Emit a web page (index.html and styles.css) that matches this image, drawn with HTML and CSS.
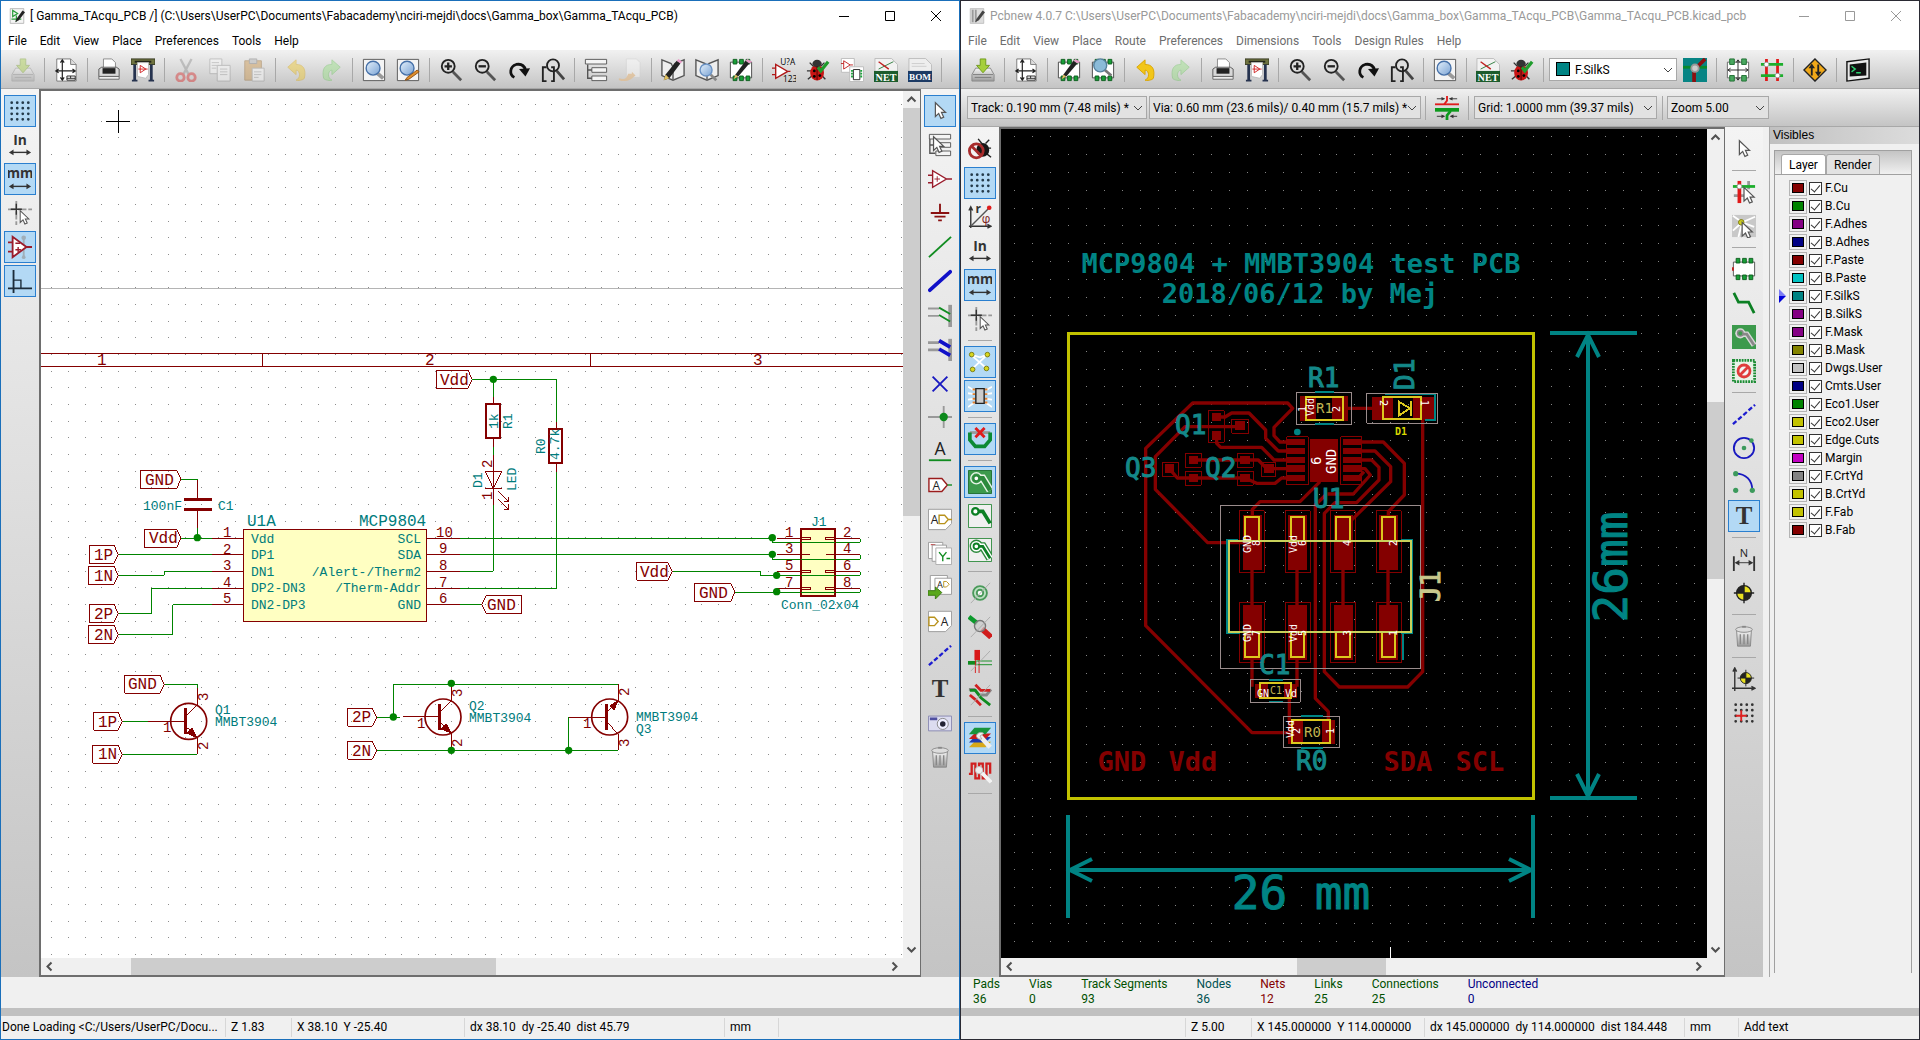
FILE: index.html
```html
<!DOCTYPE html>
<html lang="en">
<head>
    <meta charset="utf-8">
    <title>Gamma_TAcqu_PCB</title>
    <link rel="stylesheet" href="styles.css">
</head>
<body>

<!-- icon set -->
<svg class="defs" width="0" height="0">
    <defs>
        <linearGradient id="metal" x1="0" y1="0" x2="0" y2="1"><stop offset="0" stop-color="#f6f6f6"/><stop offset="1" stop-color="#9a9a9a"/></linearGradient>
        <linearGradient id="lens" x1="0" y1="0" x2="1" y2="1"><stop offset="0" stop-color="#e4f0fb"/><stop offset="1" stop-color="#7aa3d4"/></linearGradient>
        <path id="cursor" d="M0 0V15L3.600 11.600L6 17L9 15.700L6.600 10.500H11Z" fill="#fff" stroke="#555" stroke-width="1.300"/>
        <g id="pads" fill="#18a038" stroke="#0b5c1c"><path d="M4.500 1.500h4v5h-4zM11.500 1.500h4v5h-4zM18.500 1.500h4v5h-4zM4.500 19.500h4v5h-4zM11.500 19.500h4v5h-4zM18.500 19.500h4v5h-4z"/></g>
        <g id="arrows" stroke="#333" fill="#333"><path d="M4 21H22" stroke-width="1.500"/><path d="M1 21l5-3v6zM25 21l-5-3v6z" stroke="none"/></g>
        <g id="sheet"><path d="M3 1H18L24 7V25H3Z" fill="#fff" stroke="#777"/><path d="M18 1V7H24" fill="#ddd" stroke="#777"/></g>

        <symbol id="i-save" viewBox="0 0 26 26"><path d="M5 11H21L25 18V25H1V18Z" fill="url(#metal)" stroke="#888"/><path d="M2 18H24M4 21H22" stroke="#777"/><path d="M10 1H16V8H20L13 16L6 8H10Z" fill="#a5cf3b" stroke="#6f9a18"/></symbol>
        <symbol id="i-page" viewBox="0 0 26 26"><use href="#sheet"/><path d="M9 3V23M3 14H22M7 5l2-3 2 3M7 21l2 3 2-3M5 12l-3 2 3 2M20 12l3 2-3 2" fill="none" stroke="#222" stroke-width="1.300"/><path d="M14 19.500H23V24H14ZM14 22H23M18 19.500V22" fill="#fff" stroke="#222"/></symbol>
        <symbol id="i-print" viewBox="0 0 26 26"><path d="M7 12V1H16L20 5V12Z" fill="#fff" stroke="#888"/><path d="M2 12L5 10H21L24 12V20H2Z" fill="#d8d8d8" stroke="#555"/><path d="M6 11H20V17H6Z" fill="#222"/><path d="M2 20H24V23H2Z" fill="#eee" stroke="#666"/></symbol>
        <symbol id="i-plot" viewBox="0 0 26 26"><path d="M0 1H26V7H0Z" fill="#6f7340" stroke="#33361c"/><path d="M4 4H22" stroke="#22251a" stroke-width="2"/><path d="M4 7V24M22 7V24" stroke="#26334f" stroke-width="3"/><path d="M1 24.500H7M19 24.500H25" stroke="#26334f" stroke-width="2"/><path d="M7 5H19V18L16 22L7 20Z" fill="#fff" stroke="#bbb"/><path d="M10 8V16L16 12ZM8 12H18" fill="none" stroke="#d02020"/></symbol>
        <symbol id="i-cut" viewBox="0 0 26 26"><path d="M7 1L16 18M19 1L10 18" stroke="#888" stroke-width="2.500"/><circle cx="7" cy="21" r="4" fill="none" stroke="#d81c1c" stroke-width="3"/><circle cx="19" cy="21" r="4" fill="none" stroke="#d81c1c" stroke-width="3"/></symbol>
        <symbol id="i-copy" viewBox="0 0 26 26"><path d="M2 1H15V17H2Z" fill="#fff" stroke="#888"/><path d="M10 8H24V25H10Z" fill="#fff" stroke="#888"/><path d="M4 5H12M4 8H12M4 11H9M13 12H21M13 15H21M13 18H21" stroke="#999"/></symbol>
        <symbol id="i-paste" viewBox="0 0 26 26"><path d="M3 3H21V24H3Z" fill="#c98d3a" stroke="#8a5a1a"/><path d="M8 1H16V6H8Z" fill="#aaa" stroke="#666"/><path d="M11 11H24V25H11Z" fill="#fff" stroke="#888"/><path d="M13 15H21M13 18H21M13 21H18" stroke="#999"/></symbol>
        <symbol id="i-undo" viewBox="0 0 26 26"><path d="M3 10L12 2V7C20 7 23 12 21 22C20 24 13 25 12 24C17 22 17 14 12 13V18Z" fill="#f2c619" stroke="#d9a400"/></symbol>
        <symbol id="i-redo" viewBox="0 0 26 26"><path d="M23 10L14 2V7C6 7 3 12 5 22C6 24 13 25 14 24C9 22 9 14 14 13V18Z" fill="#8fe07a" stroke="#5fc050"/></symbol>
        <symbol id="i-find" viewBox="0 0 26 26"><path d="M1.500 1.500H24.500V24.500H1.500Z" fill="#f4f4f4" stroke="#555"/><path d="M16 16L23 22" stroke="#999" stroke-width="4"/><circle cx="12" cy="11" r="7.500" fill="url(#lens)" stroke="#4570a8" stroke-width="1.500"/></symbol>
        <symbol id="i-findrep" viewBox="0 0 26 26"><path d="M1.500 1.500H24.500V24.500H1.500Z" fill="#f4f4f4" stroke="#555"/><circle cx="12" cy="11" r="7.500" fill="url(#lens)" stroke="#4570a8" stroke-width="1.500"/><path d="M10 24L12 21L23 13L25 15L14 23Z" fill="#e0902c" stroke="#8c4d10"/></symbol>
        <symbol id="i-zin" viewBox="0 0 26 26"><path d="M15 15L24 24" stroke="#555" stroke-width="3"/><circle cx="10" cy="9" r="7" fill="#ddd" stroke="#222" stroke-width="2"/><path d="M6 9H14M10 5V13" stroke="#222" stroke-width="2.500"/></symbol>
        <symbol id="i-zout" viewBox="0 0 26 26"><path d="M15 15L24 24" stroke="#555" stroke-width="3"/><circle cx="10" cy="9" r="7" fill="#ddd" stroke="#222" stroke-width="2"/><path d="M6 9H14" stroke="#222" stroke-width="2.500"/></symbol>
        <symbol id="i-redraw" viewBox="0 0 26 26"><path d="M8 21C2 18 3 9 10 7C16 6 19 9 20 13" fill="none" stroke="#111" stroke-width="3"/><path d="M13 12L25 11L20 20Z" fill="#111"/></symbol>
        <symbol id="i-zfit" viewBox="0 0 26 26"><path d="M17 14L25 23" stroke="#444" stroke-width="3"/><circle cx="13" cy="8" r="6.500" fill="#ddd" stroke="#222" stroke-width="2"/><path d="M6 10H2V25H6M11 25H14V10H11" fill="none" stroke="#222" stroke-width="2"/></symbol>
        <symbol id="i-hier" viewBox="0 0 26 26"><path d="M4 7V22H9M4 13H9" fill="none" stroke="#555" stroke-width="1.500"/><path d="M1.500 1.500H24.500V6.500H1.500ZM8.500 10.500H24.500V15.500H8.500ZM8.500 19.500H24.500V24.500H8.500Z" fill="#f4f4f4" stroke="#555"/></symbol>
        <symbol id="i-leave" viewBox="0 0 26 26"><path d="M9 1H20L24 5V21H9Z" fill="#fff" stroke="#ccc"/><path d="M1 22C8 24 9 22 11 17H15V15L19 19L14 23C9 26 4 25 1 24Z" fill="#f0b060"/></symbol>
        <symbol id="i-book" viewBox="0 0 26 26"><path d="M1 2L11 6L13 10L15 6L25 2V19L13 24L1 19Z" fill="#eee" stroke="#555" stroke-width="1.500"/><path d="M13 9V23" stroke="#555" stroke-width="1.500"/></symbol>
        <symbol id="i-libedit" viewBox="0 0 26 26"><use href="#i-book"/><path d="M3 24L5 18L17 3L21 6L9 22Z" fill="#222"/><path d="M17 3L19 1L23 4L21 6Z" fill="#e89ac8"/><path d="M3 24L5 18L9 22Z" fill="#e0c060"/></symbol>
        <symbol id="i-libview" viewBox="0 0 26 26"><use href="#i-book"/><path d="M17 18L23 24" stroke="#888" stroke-width="3"/><circle cx="12" cy="13" r="6.500" fill="url(#lens)" stroke="#6a92c4" stroke-width="1.500"/></symbol>
        <symbol id="i-modedit" viewBox="0 0 26 26"><path d="M1.500 4.500H24.500V21.500H1.500Z" fill="#fff" stroke="#444"/><use href="#pads"/><path d="M5 23L7 18L18 3L22 6L10 20Z" fill="#222"/><path d="M18 3L20 1L25 4L22 6Z" fill="#e89ac8"/><path d="M5 23L7 18L10 20Z" fill="#e0c060"/></symbol>
        <symbol id="i-modview" viewBox="0 0 26 26"><path d="M1.500 4.500H24.500V21.500H1.500Z" fill="#fff" stroke="#444"/><use href="#pads"/><path d="M15 13L22 19" stroke="#777" stroke-width="3"/><circle cx="10" cy="8" r="7" fill="#8bbbd8" stroke="#54809c" stroke-width="1.500"/></symbol>
        <symbol id="i-annot" viewBox="0 0 26 26"><path d="M4 7V22L17 14.500ZM0 11H4M0 18H4M17 14.500H20" fill="#fff" stroke="#b01818" stroke-width="1.500"/><text x="9" y="8" font-size="9">U?A</text><text x="12" y="26" font-size="9">123</text></symbol>
        <symbol id="i-bug" viewBox="0 0 26 26"><path d="M4 5L9 10M20 5L16 9M1 14H6M2 23L7 19M21 23L17 19" stroke="#333" stroke-width="1.500"/><ellipse cx="12" cy="16" rx="7.500" ry="8.500" fill="#c81414"/><ellipse cx="12" cy="6" rx="5" ry="4" fill="#333"/><path d="M12 9V24" stroke="#400" /><circle cx="9" cy="14" r="1.500"/><circle cx="15" cy="19" r="1.500"/><circle cx="9" cy="20" r="1.500"/><path d="M13 10L16 14L24 4" fill="none" stroke="#1f9c2c" stroke-width="3.500"/></symbol>
        <symbol id="i-cvpcb" viewBox="0 0 26 26"><path d="M1.500 .5H15.500V15.500H1.500Z" fill="#fff" stroke="#bbb"/><path d="M4 3V12L11 7.500ZM1 6H4M11 7.500H14" fill="none" stroke="#c02020"/><path d="M10.500 9.500H25.500V25.500H10.500Z" fill="#fff" stroke="#bbb"/><path d="M14.500 12.500H21.500V23.500H14.500Z" fill="#fff" stroke="#222"/><path d="M12 14H14M12 17H14M12 20H14M22 14H24M22 17H24M22 20H24" stroke="#18a038" stroke-width="2"/></symbol>
        <symbol id="i-net" viewBox="0 0 26 26"><path d="M1 .5H19L25.500 7V15H1Z" fill="#f2f2f2" stroke="#bbb"/><path d="M5 12L21 4" stroke="#2a7a3a"/><path d="M5 4L16 12" stroke="#c02020" stroke-width="1.500"/><path d="M0 14H26V26H0Z" fill="#1c5c2c"/><text class="cap" x="13" y="24.500" font-size="11">NET</text></symbol>
        <symbol id="i-bom" viewBox="0 0 26 26"><path d="M1 .5H19L25.500 7V15H1Z" fill="#eee" stroke="#bbb"/><path d="M4 6H18M4 9H20" stroke="#ccc"/><path d="M0 14H26V26H0Z" fill="#1c3a64"/><text class="cap" x="13" y="24" font-size="10">BOM</text></symbol>
        <symbol id="i-pair" viewBox="0 0 26 26"><path d="M0 0H26V26H0Z" fill="#078484"/><path d="M0 10H26" stroke="#0a8a2a" stroke-width="3"/><path d="M12 26V13L24 1" fill="none" stroke="#8c1010" stroke-width="4"/><circle cx="13" cy="11" r="4" fill="#ccc" stroke="#999" stroke-width="2"/></symbol>
        <symbol id="i-modmode" viewBox="0 0 26 26"><path d="M1.500 4.500H24.500V21.500H1.500Z" fill="#fff" stroke="#666"/><path d="M4 1h5v6H4zM17 1h5v6H17zM4 19h5v6H4zM17 19h5v6H17z" fill="#4aa860" stroke="#1c6c30"/><path d="M13 3V23M3 13H23M11 5l2-3 2 3M11 21l2 3 2-3M5 11l-3 2 3 2M21 11l3 2-3 2" fill="none" stroke="#222"/></symbol>
        <symbol id="i-trkmode" viewBox="0 0 26 26"><path d="M7 1V25M19 1V25" stroke="#e01818" stroke-width="3"/><path d="M1 7H25M1 19H25" stroke="#1cae2c" stroke-width="3"/><circle cx="7" cy="7" r="2.500" fill="#fff" stroke="#999"/><circle cx="19" cy="19" r="2.500" fill="#fff" stroke="#999"/></symbol>
        <symbol id="i-route" viewBox="0 0 26 26"><path d="M13 1L25 13L13 25L1 13Z" fill="#f0a818" stroke="#222" stroke-width="1.500"/><path d="M9.500 19V9M16.500 7V17" stroke="#222" stroke-width="2"/><path d="M6 11L9.500 6L13 11ZM13 15L16.500 20L20 15Z" fill="#222"/></symbol>
        <symbol id="i-term" viewBox="0 0 26 26"><path d="M1 4L25 1V22L1 25Z" fill="#e8e8e8" stroke="#111" stroke-width="1.500"/><path d="M4 7L22 5V19L4 20Z" fill="#111"/><path d="M6 9L10 12L6 15M11 16H16" fill="none" stroke="#2ed070" stroke-width="1.500"/></symbol>
        <symbol id="i-trackw" viewBox="0 0 26 26"><path d="M0 9H26" stroke="#e01c1c" stroke-width="2"/><path d="M0 15H26" stroke="#0c9a1c" stroke-width="4"/><path d="M13 0V5L10 9" fill="none" stroke="#e01c1c" stroke-width="2"/><path d="M13 26V21L17 16" fill="none" stroke="#0c9a1c" stroke-width="3"/><path d="M2 3H10M16 3H24M2 22H10M17 22H24" stroke="#333"/><path d="M7 1l4 2-4 2zM19 1l-4 2 4 2zM7 20l4 2-4 2zM20 20l-4 2 4 2z" fill="#333"/></symbol>

        <symbol id="i-grid" viewBox="0 0 26 26"><path d="M4 4V24M10 4V24M16 4V24M22 4V24" stroke="#243a4a" stroke-width="3" stroke-linecap="round" stroke-dasharray="0 6"/></symbol>
        <symbol id="i-in" viewBox="0 0 26 26"><text class="unit" x="13" y="13" font-size="15">In</text><use href="#arrows"/></symbol>
        <symbol id="i-mm" viewBox="0 0 26 26"><text class="unit" x="13" y="12" font-size="15">mm</text><use href="#arrows"/></symbol>
        <symbol id="i-cross" viewBox="0 0 26 26"><path d="M9 0V26M0 9H26" stroke="#999" stroke-width="2" stroke-dasharray="9 2"/><path d="M9 3V15M3 9H15" stroke="#333" stroke-width="1.500"/><use href="#cursor" x="12" y="10" transform="translate(3 2) scale(.85)"/></symbol>
        <symbol id="i-hidpin" viewBox="0 0 26 26"><path d="M17 2V24" stroke="#a0aeb8" stroke-width="2"/><circle cx="17" cy="3" r="2.500" fill="#a0aeb8"/><circle cx="17" cy="24" r="2" fill="#a0aeb8"/><path d="M5 2V24L20 13ZM0 8H5M0 18H5M20 13H26" fill="#fff" stroke="#9a1c2c" stroke-width="2"/><path d="M8 9H13M8 16H14M11 13V19" stroke="#9a1c2c" stroke-width="1.500"/></symbol>
        <symbol id="i-orth" viewBox="0 0 26 26"><path d="M6 1V26M0 21H26" stroke="#1c2c3a" stroke-width="2"/><path d="M6 12H14V21" fill="none" stroke="#1c2c3a" stroke-width="1.500"/></symbol>

        <symbol id="i-arrow" viewBox="0 0 26 26"><use href="#cursor" x="8" y="4"/></symbol>
        <symbol id="i-hiernav" viewBox="0 0 26 26"><path d="M2 6V22H8M2 13H8" fill="none" stroke="#555" stroke-width="1.500"/><path d="M1.500 1.500H24.500V6.500H1.500ZM8.500 10.500H24.500V15.500H8.500ZM8.500 19.500H24.500V24.500H8.500Z" fill="#f4f4f4" stroke="#555"/><use href="#cursor" x="6" y="4"/></symbol>
        <symbol id="i-comp" viewBox="0 0 26 26"><path d="M5 4V22L20 13ZM0 9H5M0 17H5M20 13H26" fill="#fff" stroke="#9a1c2c" stroke-width="1.500"/><path d="M7 13H13M10 10V16" stroke="#9a1c2c"/></symbol>
        <symbol id="i-power" viewBox="0 0 26 26"><path d="M13 3V13M3 13H23M7 17H19M11 21H15" stroke="#8a1010" stroke-width="2"/></symbol>
        <symbol id="i-wire" viewBox="0 0 26 26"><path d="M1 24L25 2" stroke="#108c20" stroke-width="2"/></symbol>
        <symbol id="i-bus" viewBox="0 0 26 26"><path d="M2 23L24 3" stroke="#1010c8" stroke-width="4" stroke-linecap="round"/></symbol>
        <symbol id="i-wentry" viewBox="0 0 26 26"><path d="M24 2V26" stroke="#999" stroke-width="4"/><path d="M0 6H12M0 14H12" stroke="#999" stroke-width="2"/><path d="M12 5L24 12M12 13L24 20" stroke="#108c20" stroke-width="2"/></symbol>
        <symbol id="i-bentry" viewBox="0 0 26 26"><path d="M24 2V26" stroke="#999" stroke-width="4"/><path d="M0 6H12M0 14H12" stroke="#999" stroke-width="3"/><path d="M12 4L24 11M12 13L24 20" stroke="#1010c8" stroke-width="4"/></symbol>
        <symbol id="i-noconn" viewBox="0 0 26 26"><path d="M5 6L21 22M21 6L5 22" stroke="#1818c0" stroke-width="2"/></symbol>
        <symbol id="i-junc" viewBox="0 0 26 26"><path d="M0 13H26M17 1V25" stroke="#999" stroke-width="2"/><circle cx="17" cy="13" r="4.500" fill="#0c8a1c"/></symbol>
        <symbol id="i-netlbl" viewBox="0 0 26 26"><text class="glyph" x="13" y="17" font-size="19">A</text><path d="M1 23H25" stroke="#108c20" stroke-width="2"/></symbol>
        <symbol id="i-glbl" viewBox="0 0 26 26"><path d="M1 6H15L21 13L15 20H1Z" fill="#fff" stroke="#9a1c1c" stroke-width="1.500"/><path d="M21 13H26" stroke="#108c20" stroke-width="1.500"/><text class="glyph" x="9" y="18" font-size="13">A</text></symbol>
        <symbol id="i-hlbl" viewBox="0 0 26 26"><path d="M.5 2.500H25.500V18L19 24.500H.5Z" fill="#fff" stroke="#999"/><text class="glyph" x="7" y="18" font-size="13">A</text><path d="M12 9H18L22 13.500L18 18H12ZM22 13.500H26" fill="#fff" stroke="#b8921c" stroke-width="1.500"/></symbol>
        <symbol id="i-hsheet" viewBox="0 0 26 26"><path d="M.5 1.500H16V19H.5Z" fill="#fff" stroke="#999"/><path d="M3 4H8M5 4V9" stroke="#c02020"/><path d="M4.500 4.500H20V22H4.500Z" fill="#fff" stroke="#999"/><path d="M8.500 7.500H25.500V25.500H8.500Z" fill="#fff" stroke="#aaa"/><path d="M12 12L16 17L20 12M16 17V22M20 19H24" fill="none" stroke="#108c20" stroke-width="1.500"/></symbol>
        <symbol id="i-himp" viewBox="0 0 26 26"><path d="M2.500 .5H21V17H2.500Z" fill="#fff" stroke="#999"/><path d="M7.500 3.500H25.500V21H7.500Z" fill="#fff" stroke="#999"/><text class="glyph" x="13" y="14" font-size="10">A</text><path d="M17 7H20L23 10L20 13H17Z" fill="#fff" stroke="#b8921c"/><path d="M0 17H8V13L15 19L8 26V22H0Z" fill="#5aa81c" stroke="#3a7810"/></symbol>
        <symbol id="i-hpin" viewBox="0 0 26 26"><path d="M.5 2.500H25.500V18L19 24.500H.5Z" fill="#fff" stroke="#999"/><path d="M1 9H7L11 13.500L7 18H1Z" fill="#fff" stroke="#b8921c" stroke-width="1.500"/><text class="glyph" x="18" y="18" font-size="13">A</text></symbol>
        <symbol id="i-dash" viewBox="0 0 26 26"><path d="M1 24L25 3" stroke="#1c1cd0" stroke-width="2.500" stroke-dasharray="5 2.500"/></symbol>
        <symbol id="i-text" viewBox="0 0 26 26"><text class="serif" x="13" y="22" font-size="27">T</text></symbol>
        <symbol id="i-image" viewBox="0 0 26 26"><path d="M.5 5.500H25.500V21.500H.5Z" fill="#dcdcf0" stroke="#8888b0"/><path d="M2 7H10V10H2Z" fill="#5050a0"/><circle cx="16" cy="14" r="6" fill="#eef" stroke="#888"/><circle cx="16" cy="14" r="3" fill="#223"/></symbol>
        <symbol id="i-trash" viewBox="0 0 26 26"><path d="M5 7H21L20 24H6Z" fill="url(#metal)" stroke="#888"/><ellipse cx="13" cy="6" rx="9" ry="3" fill="#ddd" stroke="#888"/><path d="M9 11V22M13 11V22M17 11V22" stroke="#888" stroke-width="1.500"/><path d="M11 3H15" stroke="#888" stroke-width="2"/></symbol>

        <symbol id="i-drcoff" viewBox="0 0 26 26"><path d="M11 2L15 7M23 3L19 7M25 12H20M25 22L20 18" stroke="#222" stroke-width="1.500"/><ellipse cx="16" cy="14" rx="7" ry="7.500" fill="#161616"/><circle cx="9" cy="15" r="7.500" fill="none" stroke="#a82c2c" stroke-width="3"/><path d="M4 10L14 20" stroke="#a82c2c" stroke-width="3"/></symbol>
        <symbol id="i-polar" viewBox="0 0 26 26"><path d="M3 25V3M1 23H24M1 6l2-4 2 4M21 21l4 2-4 2" fill="none" stroke="#333" stroke-width="1.500"/><path d="M3 23L22 4" stroke="#555" stroke-width="1.500"/><circle cx="23" cy="3" r="2.500" fill="#e01c1c"/><text class="unit" x="11" y="9" font-size="13">r</text><text x="15" y="20" font-size="13" fill="#7a2020">φ</text></symbol>
        <symbol id="i-rats" viewBox="0 0 26 26"><path d="M3 5L19 19M21 5L4 21M3 5L13 8L21 5" stroke="#fff" stroke-width="2" fill="none"/><g fill="#d8d820" stroke="#777710"><circle cx="4" cy="5" r="2.500"/><circle cx="21" cy="5" r="2.500"/><circle cx="5" cy="21" r="2.500"/><circle cx="20" cy="20" r="2.500"/></g></symbol>
        <symbol id="i-modrats" viewBox="0 0 26 26"><path d="M0 3L7 7M0 10L7 11M0 17L7 16M0 25L7 20M26 3L19 7M26 10L19 11M26 17L19 16M26 25L19 20" stroke="#fff" stroke-width="2"/><path d="M5 6H8M5 11H8M5 16H8M5 20H8M18 6H21M18 11H21M18 16H21M18 20H21" stroke="#e08030" stroke-width="2"/><path d="M8.500 5H17.500V21H8.500Z" fill="#ccc" stroke="#222" stroke-width="1.500"/></symbol>
        <symbol id="i-autodel" viewBox="0 0 26 26"><path d="M2 6H24" stroke="#999" stroke-width="3"/><path d="M2 6V14L8 21H18L24 14V6" fill="none" stroke="#0c8a34" stroke-width="4"/><path d="M8 1L18 11M18 1L8 11" stroke="#e01c1c" stroke-width="3"/></symbol>
        <symbol id="i-zone1" viewBox="0 0 26 26"><path d="M.5 .5H25.500V25.500H.5Z" fill="#3c9a4c" stroke="#1c6c2c"/><path d="M9 9H16L24 22" fill="none" stroke="#e8f4e8" stroke-width="8"/><circle cx="9" cy="9" r="6" fill="#3c9a4c" stroke="#e8f4e8" stroke-width="1.500"/><path d="M9 9H16L24 22" fill="none" stroke="#2c8a3c" stroke-width="5"/><circle cx="9" cy="9" r="3" fill="#fff" stroke="#2c8a3c" stroke-width="2"/></symbol>
        <symbol id="i-zone2" viewBox="0 0 26 26"><path d="M.5 .5H25.500V25.500H.5Z" fill="#f0f0f0" stroke="#2c8a3c"/><path d="M9 8H16L24 21" fill="none" stroke="#0c8024" stroke-width="4"/><circle cx="8" cy="8" r="3.500" fill="#fff" stroke="#0c8024" stroke-width="2.500"/></symbol>
        <symbol id="i-zone3" viewBox="0 0 26 26"><path d="M.5 .5H25.500V25.500H.5Z" fill="#f0f0f0" stroke="#2c8a3c"/><path d="M9 9H16L24 22" fill="none" stroke="#2c8a3c" stroke-width="9"/><circle cx="9" cy="9" r="6.500" fill="#fff" stroke="#2c8a3c" stroke-width="1.500"/><path d="M9 9H16L24 22" fill="none" stroke="#fff" stroke-width="6"/><path d="M9 9H16L24 22" fill="none" stroke="#0c8024" stroke-width="3"/><circle cx="9" cy="9" r="3" fill="#fff" stroke="#0c8024" stroke-width="2"/></symbol>
        <symbol id="i-padsk" viewBox="0 0 26 26"><circle cx="13" cy="13" r="7.500" fill="#bfe0c4" stroke="#4a9a5a" stroke-width="2"/><circle cx="13" cy="13" r="3.500" fill="#fff" stroke="#4a9a5a" stroke-width="2"/><path d="M3 24L24 2" stroke="#aaa"/></symbol>
        <symbol id="i-viask" viewBox="0 0 26 26"><path d="M1 2L10 9" stroke="#0c9a2c" stroke-width="5"/><path d="M15 15L25 24" stroke="#d01c1c" stroke-width="6"/><circle cx="13" cy="12" r="6" fill="#ccc" fill-opacity=".7" stroke="#777" stroke-width="1.500"/><path d="M3 24L24 2" stroke="#aaa"/></symbol>
        <symbol id="i-trksk" viewBox="0 0 26 26"><path d="M7 1H13V12H7Z" fill="#d81818"/><path d="M0 13H9V17H0Z" fill="#108c20"/><path d="M8 12V26M12 12V26" stroke="#d81818"/><path d="M9 13H26M9 17H26" stroke="#108c20"/><path d="M3 24L24 2" stroke="#aaa"/></symbol>
        <symbol id="i-contr" viewBox="0 0 26 26"><path d="M1 7H7L12 13H20L25 7" fill="none" stroke="#888" stroke-width="3"/><path d="M8 2L14 8H24M2 13L8 18L14 24" fill="none" stroke="#d02020" stroke-width="3"/><path d="M2 8H8L14 16L24 24" fill="none" stroke="#108c20" stroke-width="3"/><path d="M3 24L24 2" stroke="#aaa"/></symbol>
        <symbol id="i-layers" viewBox="0 0 26 26"><path d="M1 23L7 17H25L19 23Z" fill="#d8a818"/><path d="M1 18L7 12H25L19 18Z" fill="#1c3cb0"/><path d="M1 14L7 8H25L19 14Z" fill="#c81c1c"/><path d="M1 9L7 2H25L19 9Z" fill="#18943c"/><path d="M13 11L24 23" stroke="#eee" stroke-width="5"/><path d="M9 11a5 5 0 0 1 8-3l-4 3 2 3a5 5 0 0 1-6-3" fill="#eee" stroke="#aaa"/></symbol>
        <symbol id="i-mwave" viewBox="0 0 26 26"><path d="M1 15H4V4H8V20H12V4H16V20H20V4H24V15" fill="none" stroke="#d02020" stroke-width="2.500"/><path d="M12 11L25 24" stroke="#f4f4f4" stroke-width="4"/><circle cx="12" cy="11" r="4" fill="#eee" stroke="#bbb"/></symbol>

        <symbol id="i-hlnet" viewBox="0 0 26 26"><path d="M18 1V10M13 17H2" stroke="#999" stroke-width="3"/><path d="M8 1V25" stroke="#e01818" stroke-width="4"/><path d="M1 7H25" stroke="#1cae2c" stroke-width="3"/><circle cx="8" cy="7" r="2.500" fill="#fff" stroke="#999"/><use href="#cursor" x="13" y="8"/></symbol>
        <symbol id="i-local" viewBox="0 0 26 26"><path d="M0 1H26V25H0Z" fill="#c8c8c8"/><path d="M11 9L1 2M11 9L25 3M11 9L1 18M11 9L24 14M11 9L7 25" stroke="#fff" stroke-width="2"/><circle cx="10" cy="9" r="3" fill="#d0d020" stroke="#777710"/><use href="#cursor" x="11" y="9"/></symbol>
        <symbol id="i-addmod" viewBox="0 0 26 26"><path d="M1.500 5.500H24.500V20.500H1.500Z" fill="#fff" stroke="#555"/><use href="#pads"/><path d="M1 11V15" stroke="#c02020" stroke-width="2"/></symbol>
        <symbol id="i-track" viewBox="0 0 26 26"><path d="M2 2L7 12H18L24 24" fill="none" stroke="#0c8024" stroke-width="3"/></symbol>
        <symbol id="i-zone" viewBox="0 0 26 26"><path d="M0 0H26V26H0Z" fill="#3c9a4c"/><path d="M9 10H16L24 22" fill="none" stroke="#d8d8d8" stroke-width="6"/><circle cx="9" cy="9" r="5.500" fill="#d8d8d8"/><path d="M9 10H16L24 22" fill="none" stroke="#888" stroke-width="3"/><circle cx="9" cy="9" r="3" fill="#3c9a4c" stroke="#888" stroke-width="1.500"/></symbol>
        <symbol id="i-keep" viewBox="0 0 26 26"><path d="M1.500 1.500H24.500V24.500H1.500Z" fill="#e8f4e8" stroke="#1c8c34" stroke-width="3" stroke-dasharray="2 1"/><circle cx="13" cy="13" r="6.500" fill="#f4f4f4" stroke="#e03c3c" stroke-width="3"/><path d="M9 17L17 9" stroke="#e03c3c" stroke-width="3"/></symbol>
        <symbol id="i-circle" viewBox="0 0 26 26"><circle cx="13" cy="13" r="11" fill="none" stroke="#1818c0" stroke-width="2"/><circle cx="13" cy="13" r="2.500" fill="#3c9a5c"/><circle cx="21" cy="5" r="2.500" fill="#3c9a5c"/></symbol>
        <symbol id="i-arc" viewBox="0 0 26 26"><path d="M4 4C15 4 22 11 22 22" fill="none" stroke="#1818c0" stroke-width="2"/><g fill="#3c9a5c"><circle cx="4" cy="4" r="2.800"/><circle cx="22" cy="22" r="2.800"/><circle cx="4" cy="22" r="2.800"/></g></symbol>
        <symbol id="i-dim" viewBox="0 0 26 26"><text class="glyph" x="13" y="11" font-size="12">N</text><path d="M2 10V26M24 10V26" stroke="#333" stroke-width="2"/><path d="M4 17H22" stroke="#333"/><path d="M3 17l5-3v6zM23 17l-5-3v6z" fill="#333"/></symbol>
        <symbol id="i-target" viewBox="0 0 26 26"><circle cx="13" cy="13" r="8" fill="#e8e020" stroke="#222" stroke-width="1.500"/><path d="M13 5A8 8 0 0 0 5 13H13ZM13 21A8 8 0 0 0 21 13H13Z" fill="#222"/><path d="M13 2V24M2 13H24" stroke="#222" stroke-width="1.500"/></symbol>
        <symbol id="i-origin" viewBox="0 0 26 26"><path d="M3 26V2M0 23H25M1 5l2-4 2 4M21 21l4 2-4 2" fill="none" stroke="#333" stroke-width="1.500"/><circle cx="15" cy="12" r="6" fill="#e8e020" stroke="#222"/><path d="M15 6A6 6 0 0 0 9 12H15ZM15 18A6 6 0 0 0 21 12H15Z" fill="#222"/><path d="M15 3V21M6 12H24" stroke="#222"/></symbol>
        <symbol id="i-gridorg" viewBox="0 0 26 26"><path d="M4 4V24M10 4V24M16 4V24M22 4V24" stroke="#333" stroke-width="3" stroke-linecap="round" stroke-dasharray="0 6"/><path d="M10 10V22M4 16H16" stroke="#e02020" stroke-width="2"/></symbol>

        <symbol id="i-eeapp" viewBox="0 0 26 26"><path d="M2 1H24V25H2Z" fill="#f4f4f4" stroke="#999"/><path d="M6 4V14L14 9ZM4 18H20M12 12V22" fill="none" stroke="#2c9c3c" stroke-width="2"/><path d="M10 23L12 18L22 4L26 7L16 20Z" fill="#222"/></symbol>
        <symbol id="i-pcbapp" viewBox="0 0 26 26"><path d="M2 1H24V25H2Z" fill="#ddd" stroke="#aaa"/><path d="M6 3V23M11 3V23" stroke="#999" stroke-width="3"/><path d="M10 23L12 18L22 4L26 7L16 20Z" fill="#444"/></symbol>
        <symbol id="i-up" viewBox="0 0 17 17"><path d="M4.500 10.500L8.500 6.500L12.500 10.500" fill="none" stroke="#505050" stroke-width="2"/></symbol>
        <symbol id="i-down" viewBox="0 0 17 17"><path d="M4.500 6.500L8.500 10.500L12.500 6.500" fill="none" stroke="#505050" stroke-width="2"/></symbol>
        <symbol id="i-left" viewBox="0 0 17 17"><path d="M10.500 4.500L6.500 8.500L10.500 12.500" fill="none" stroke="#505050" stroke-width="2"/></symbol>
        <symbol id="i-right" viewBox="0 0 17 17"><path d="M6.500 4.500L10.500 8.500L6.500 12.500" fill="none" stroke="#505050" stroke-width="2"/></symbol>
        <symbol id="i-chev" viewBox="0 0 10 10"><path d="M1 3L5 7L9 3" fill="none" stroke="#444" stroke-width="1"/></symbol>
        <symbol id="w-min" viewBox="0 0 10 10"><path d="M0 5.500H10" stroke="currentColor"/></symbol>
        <symbol id="w-max" viewBox="0 0 10 10"><path d="M.5 .5H9.500V9.500H.5Z" fill="none" stroke="currentColor"/></symbol>
        <symbol id="w-close" viewBox="0 0 10 10"><path d="M0 0L10 10M10 0L0 10" stroke="currentColor"/></symbol>

        <!-- 50px tile, three dots each way -->
        <pattern id="dots-sch" x="68" y="371" width="50" height="50" patternUnits="userSpaceOnUse">
            <path d="M0 .5h1M17 .5h1M33 .5h1M0 16.500h1M17 16.500h1M33 16.500h1M0 33.500h1M17 33.500h1M33 33.500h1" stroke="#8c8c8c"/>
        </pattern>
        <path id="dotrow" d="M0 .5h1M18 .5h1M36 .5h1M54 .5h1M72 .5h1M89 .5h1M107 .5h1M125 .5h1M143 .5h1" stroke="#848484"/>
        <pattern id="dots-pcb" x="1086" y="136" width="161" height="161" patternUnits="userSpaceOnUse">
            <use href="#dotrow"/><use href="#dotrow" y="18"/><use href="#dotrow" y="36"/><use href="#dotrow" y="54"/><use href="#dotrow" y="72"/><use href="#dotrow" y="89"/><use href="#dotrow" y="107"/><use href="#dotrow" y="125"/><use href="#dotrow" y="143"/>
        </pattern>
    </defs>
</svg>

<div class="desktop">

<!-- Eeschema -->
<section class="window active">
    <header class="titlebar">
        <svg class="app-icon"><use href="#i-eeapp"/></svg>
        <h1>[ Gamma_TAcqu_PCB /] (C:\Users\UserPC\Documents\Fabacademy\nciri-mejdi\docs\Gamma_box\Gamma_TAcqu_PCB)</h1>
        <div class="controls">
            <button aria-label="Minimize"><svg><use href="#w-min"/></svg></button>
            <button aria-label="Maximize"><svg><use href="#w-max"/></svg></button>
            <button aria-label="Close"><svg><use href="#w-close"/></svg></button>
        </div>
    </header>
    <nav class="menu">
        <button>File</button><button>Edit</button><button>View</button><button>Place</button><button>Preferences</button><button>Tools</button><button>Help</button>
    </nav>
    <div class="toolbar">
        <button aria-label="Save" disabled><svg><use href="#i-save"/></svg></button>
        <hr>
        <button aria-label="Page settings"><svg><use href="#i-page"/></svg></button>
        <hr>
        <button aria-label="Print"><svg><use href="#i-print"/></svg></button>
        <button aria-label="Plot"><svg><use href="#i-plot"/></svg></button>
        <hr>
        <button aria-label="Cut" disabled><svg><use href="#i-cut"/></svg></button>
        <button aria-label="Copy" disabled><svg><use href="#i-copy"/></svg></button>
        <button aria-label="Paste" disabled><svg><use href="#i-paste"/></svg></button>
        <hr>
        <button aria-label="Undo" disabled><svg><use href="#i-undo"/></svg></button>
        <button aria-label="Redo" disabled><svg><use href="#i-redo"/></svg></button>
        <hr>
        <button aria-label="Find"><svg><use href="#i-find"/></svg></button>
        <button aria-label="Find and replace"><svg><use href="#i-findrep"/></svg></button>
        <hr>
        <button aria-label="Zoom in"><svg><use href="#i-zin"/></svg></button>
        <button aria-label="Zoom out"><svg><use href="#i-zout"/></svg></button>
        <button aria-label="Redraw"><svg><use href="#i-redraw"/></svg></button>
        <button aria-label="Zoom fit"><svg><use href="#i-zfit"/></svg></button>
        <hr>
        <button aria-label="Navigate hierarchy"><svg><use href="#i-hier"/></svg></button>
        <button aria-label="Leave sheet" disabled><svg><use href="#i-leave"/></svg></button>
        <hr>
        <button aria-label="Library editor"><svg><use href="#i-libedit"/></svg></button>
        <button aria-label="Library browser"><svg><use href="#i-libview"/></svg></button>
        <button aria-label="Footprint editor"><svg><use href="#i-modedit"/></svg></button>
        <hr>
        <button aria-label="Annotate"><svg><use href="#i-annot"/></svg></button>
        <button aria-label="Rules check"><svg><use href="#i-bug"/></svg></button>
        <button aria-label="Assign footprints"><svg><use href="#i-cvpcb"/></svg></button>
        <button aria-label="Netlist"><svg><use href="#i-net"/></svg></button>
        <button aria-label="Bill of materials"><svg><use href="#i-bom"/></svg></button>
        <hr>
    </div>
    <main class="work">
        <div class="toolbar side">
            <button class="on" aria-label="Grid"><svg><use href="#i-grid"/></svg></button>
            <button aria-label="Inches"><svg><use href="#i-in"/></svg></button>
            <button class="on" aria-label="Millimeters"><svg><use href="#i-mm"/></svg></button>
            <button aria-label="Cursor shape"><svg><use href="#i-cross"/></svg></button>
            <button class="on" aria-label="Hidden pins"><svg><use href="#i-hidpin"/></svg></button>
            <button class="on" aria-label="HV orientation"><svg><use href="#i-orth"/></svg></button>
        </div>
        <div class="frame">
            <svg class="canvas sch" viewBox="41 91 862 867" preserveAspectRatio="xMinYMin slice">
                <rect x="41" y="91" width="862" height="867" fill="url(#dots-sch)"/>
                <path d="M41 288.500H903" stroke="#b4b4b4"/>
                <path d="M41 353.500H903M41 366.500H903M262.500 353V366M590.500 353V366" stroke="#840000"/>
                <path d="M106 121.500H130M118.500 110V133" stroke="#000"/>

                <g transform="translate(60 340) scale(.33333)">
                    <g class="wire">
                        <path d="M363 418H412V430M363 595H455M412 560V595M175 643H455M175 706H313V694H455M175 820H275V745H455M175 883H338V794H455"/>
                        <path d="M313 1033H412V1045M187 1144H265M187 1243H412M950 1132H1020M1000 1132V1033H1674M950 1231H1674"/>
                    </g>
                    <g class="part">
                        <rect x="551" y="569" width="549" height="275" fill="#ffffc2"/>
                        <path d="M412 420V477M412 510V565M455 595H551M455 643H551M455 694H551M455 745H551M455 794H551M1100 595H1200M1100 643H1200M1100 694H1200M1100 745H1200M1100 794H1200"/>
                        <path d="M371 478H457M371 508H457" stroke-width="8"/>
                        <path d="M241 391H350L363 418L350 445H241ZM253 569H350L363 595L350 622H253ZM88 616H162L175 643L162 670H88ZM85 679H162L175 706L162 733H85ZM88 793H162L175 820L162 847H88ZM85 856H162L175 883L162 910H85Z"/>
                        <path d="M194 1006H300L313 1033L300 1060H194ZM101 1117H174L187 1144L174 1171H101ZM98 1216H174L187 1243L174 1270H98ZM863 1105H937L950 1132L937 1159H863ZM863 1204H937L950 1231L937 1258H863ZM1129 91H1224L1237 118L1224 145H1129Z"/>
                    </g>
                    <g id="npn" class="bjt">
                        <circle cx="386" cy="1144" r="54" stroke-width="5"/>
                        <path d="M376 1105V1183" stroke-width="9"/>
                        <path d="M265 1144H376M376 1130L412 1095V1045M376 1158L412 1192V1243"/>
                        <path d="M410 1192L381 1180L396 1164Z" fill="#840000"/>
                    </g>
                    <use href="#npn" x="763" y="-13"/>
                    <g fill="#008400"><circle cx="412" cy="593" r="11"/><circle cx="1000" cy="1131" r="11"/><circle cx="1174" cy="1030" r="11"/><circle cx="1174" cy="1231" r="11"/></g>
                </g>

                <g transform="translate(430 340) scale(.33333)">
                    <g class="wire">
                        <path d="M127 118H380V245M190 118V170M190 320V345M190 495V694H90M380 395V745H90M90 794H155M90 595H1027V607H1291V597M90 643H1027V658H1291V645M727 694H991V706H1291V695M915 757H1291V747M416 1231V1132"/>
                    </g>
                    <g class="part">
                        <path d="M190 170V190M190 295V320M190 345V495M380 245V267M380 370V395M166 394H215L190 445ZM166 445H215M205 455L236 485M205 478L236 508M236 470V485H221M236 493V508H221"/>
                        <path d="M155 794L168 767H275V820H168ZM620 667H713L727 694L713 721H620ZM793 730H902L915 757L902 784H793Z"/>
                        <rect x="167" y="191" width="44" height="103" fill="none" stroke-width="6"/>
                        <rect x="357" y="267" width="40" height="103" fill="none" stroke-width="6"/>
                        <rect x="1113" y="567" width="103" height="201" fill="#ffffc2" stroke-width="6"/>
                        <path d="M1040 595H1113M1216 595H1291M1040 643H1113M1216 643H1291M1040 694H1113M1216 694H1291M1040 745H1113M1216 745H1291"/>
                        <path d="M1113 592H1141V599H1113M1216 592H1188V599H1216M1113 643H1141M1216 643H1188M1113 691H1141V698H1113M1216 691H1188V698H1216M1113 742H1141V749H1113M1216 742H1188V749H1216" fill="none"/>
                    </g>
                    <g class="wire"><path d="M1113 607H1216M1113 658H1216M1113 706H1216M1113 757H1216"/></g>
                    <g class="bjt">
                        <circle cx="539" cy="1131" r="54" stroke-width="5"/>
                        <path d="M529 1092V1170" stroke-width="9"/>
                        <path d="M416 1132H529M529 1117L565 1083V1033M529 1145L565 1182V1231"/>
                        <path d="M563 1084L552 1110L540 1096Z" fill="#840000"/>
                    </g>
                    <g fill="#008400"><circle cx="190" cy="118" r="11"/><circle cx="1027" cy="593" r="11"/><circle cx="1027" cy="643" r="11"/><circle cx="1040" cy="706" r="11"/><circle cx="1040" cy="755" r="11"/><circle cx="416" cy="1231" r="11"/></g>
                </g>

                <g class="lbl">
                    <text x="145" y="485">GND</text><text x="149" y="543">Vdd</text><text x="94" y="560">1P</text><text x="94" y="581">1N</text><text x="94" y="619">2P</text><text x="94" y="640">2N</text>
                    <text x="128" y="689">GND</text><text x="98" y="727">1P</text><text x="98" y="759">1N</text><text x="352" y="722">2P</text><text x="352" y="756">2N</text>
                    <text x="440" y="385">Vdd</text><text x="640" y="577">Vdd</text><text x="699" y="598">GND</text><text x="487" y="610">GND</text>
                    <text x="97" y="365">1</text><text x="425" y="365">2</text><text x="753" y="365">3</text>
                </g>
                <g class="pin">
                    <text x="223" y="537">1</text><text x="223" y="554">2</text><text x="223" y="570">3</text><text x="223" y="587">4</text><text x="223" y="603">5</text>
                    <text x="436" y="537">10</text><text x="439" y="553">9</text><text x="439" y="570">8</text><text x="439" y="587">7</text><text x="439" y="603">6</text>
                    <text x="785" y="537">1</text><text x="785" y="553">3</text><text x="785" y="570">5</text><text x="785" y="587">7</text>
                    <text x="843" y="537">2</text><text x="843" y="553">4</text><text x="843" y="570">6</text><text x="843" y="587">8</text>
                    <text x="163" y="732">1</text><text x="417" y="728">1</text><text x="583" y="728">1</text>
                    <text transform="translate(208 701) rotate(-90)">3</text><text transform="translate(208 750) rotate(-90)">2</text>
                    <text transform="translate(462 697) rotate(-90)">3</text><text transform="translate(462 747) rotate(-90)">2</text>
                    <text transform="translate(629 696) rotate(-90)">2</text><text transform="translate(629 747) rotate(-90)">3</text>
                    <text transform="translate(492 468) rotate(-90)">2</text><text transform="translate(492 500) rotate(-90)">1</text>
                </g>
                <g class="ref">
                    <text x="247" y="526" class="big">U1A</text><text x="359" y="526" class="big">MCP9804</text>
                    <text x="251" y="543">Vdd</text><text x="251" y="559">DP1</text><text x="251" y="576">DN1</text><text x="251" y="592">DP2-DN3</text><text x="251" y="609">DN2-DP3</text>
                    <g text-anchor="end"><text x="421" y="543">SCL</text><text x="421" y="559">SDA</text><text x="421" y="576">/Alert-/Therm2</text><text x="421" y="592">/Therm-Addr</text><text x="421" y="609">GND</text></g>
                    <text x="143" y="510">100nF</text><text x="218" y="510">C1</text>
                    <text x="215" y="714">Q1</text><text x="215" y="726">MMBT3904</text><text x="469" y="710">Q2</text><text x="469" y="722">MMBT3904</text><text x="636" y="721">MMBT3904</text><text x="636" y="733">Q3</text>
                    <text x="811" y="526">J1</text><text x="781" y="609">Conn_02x04</text>
                    <text transform="translate(498 429) rotate(-90)">1k</text><text transform="translate(512 429) rotate(-90)">R1</text>
                    <text transform="translate(545 454) rotate(-90)">R0</text><text transform="translate(559 460) rotate(-90)">4.7k</text>
                    <text transform="translate(482 488) rotate(-90)">D1</text><text transform="translate(516 491) rotate(-90)">LED</text>
                </g>
            </svg>
            <div class="vscroll"><svg><use href="#i-up"/></svg><i class="lead"></i><i class="thumb"></i><i class="rest"></i><svg><use href="#i-down"/></svg></div>
            <div class="hscroll"><svg><use href="#i-left"/></svg><i class="lead"></i><i class="thumb"></i><i class="rest"></i><svg><use href="#i-right"/></svg></div>
            <div class="corner"></div>
        </div>
        <div class="toolbar side">
            <button class="on" aria-label="Select"><svg><use href="#i-arrow"/></svg></button>
            <button aria-label="Hierarchy"><svg><use href="#i-hiernav"/></svg></button>
            <button aria-label="Place component"><svg><use href="#i-comp"/></svg></button>
            <button aria-label="Place power port"><svg><use href="#i-power"/></svg></button>
            <button aria-label="Wire"><svg><use href="#i-wire"/></svg></button>
            <button aria-label="Bus"><svg><use href="#i-bus"/></svg></button>
            <button aria-label="Wire entry"><svg><use href="#i-wentry"/></svg></button>
            <button aria-label="Bus entry"><svg><use href="#i-bentry"/></svg></button>
            <button aria-label="No connect"><svg><use href="#i-noconn"/></svg></button>
            <button aria-label="Junction"><svg><use href="#i-junc"/></svg></button>
            <button aria-label="Net name"><svg><use href="#i-netlbl"/></svg></button>
            <button aria-label="Global label"><svg><use href="#i-glbl"/></svg></button>
            <button aria-label="Hierarchical label"><svg><use href="#i-hlbl"/></svg></button>
            <button aria-label="Hierarchical sheet"><svg><use href="#i-hsheet"/></svg></button>
            <button aria-label="Import label"><svg><use href="#i-himp"/></svg></button>
            <button aria-label="Sheet pin"><svg><use href="#i-hpin"/></svg></button>
            <button aria-label="Graphic line"><svg><use href="#i-dash"/></svg></button>
            <button aria-label="Text"><svg><use href="#i-text"/></svg></button>
            <button aria-label="Image"><svg><use href="#i-image"/></svg></button>
            <button aria-label="Delete"><svg><use href="#i-trash"/></svg></button>
        </div>
    </main>
    <div class="messages"></div>
    <footer class="status">
        <span>Done Loading &lt;C:/Users/UserPC/Docu...</span><span>Z 1.83</span><span>X 38.10&nbsp; Y -25.40</span><span>dx 38.10&nbsp; dy -25.40&nbsp; dist 45.79</span><span>mm</span><span></span>
    </footer>
</section>

<!-- Pcbnew -->
<section class="window">
    <header class="titlebar">
        <svg class="app-icon"><use href="#i-pcbapp"/></svg>
        <h1>Pcbnew 4.0.7 C:\Users\UserPC\Documents\Fabacademy\nciri-mejdi\docs\Gamma_box\Gamma_TAcqu_PCB\Gamma_TAcqu_PCB.kicad_pcb</h1>
        <div class="controls">
            <button aria-label="Minimize"><svg><use href="#w-min"/></svg></button>
            <button aria-label="Maximize"><svg><use href="#w-max"/></svg></button>
            <button aria-label="Close"><svg><use href="#w-close"/></svg></button>
        </div>
    </header>
    <nav class="menu">
        <button>File</button><button>Edit</button><button>View</button><button>Place</button><button>Route</button><button>Preferences</button><button>Dimensions</button><button>Tools</button><button>Design Rules</button><button>Help</button>
    </nav>
    <div class="toolbar">
        <button aria-label="Save"><svg><use href="#i-save"/></svg></button>
        <hr>
        <button aria-label="Page settings"><svg><use href="#i-page"/></svg></button>
        <hr>
        <button aria-label="Footprint editor"><svg><use href="#i-modedit"/></svg></button>
        <button aria-label="Footprint viewer"><svg><use href="#i-modview"/></svg></button>
        <hr>
        <button aria-label="Undo"><svg><use href="#i-undo"/></svg></button>
        <button aria-label="Redo" disabled><svg><use href="#i-redo"/></svg></button>
        <hr>
        <button aria-label="Print"><svg><use href="#i-print"/></svg></button>
        <button aria-label="Plot"><svg><use href="#i-plot"/></svg></button>
        <hr>
        <button aria-label="Zoom in"><svg><use href="#i-zin"/></svg></button>
        <button aria-label="Zoom out"><svg><use href="#i-zout"/></svg></button>
        <button aria-label="Redraw"><svg><use href="#i-redraw"/></svg></button>
        <button aria-label="Zoom fit"><svg><use href="#i-zfit"/></svg></button>
        <hr>
        <button aria-label="Find"><svg><use href="#i-find"/></svg></button>
        <hr>
        <button aria-label="Netlist"><svg><use href="#i-net"/></svg></button>
        <button aria-label="Rules check"><svg><use href="#i-bug"/></svg></button>
        <hr>
        <div class="combo layer"><i class="swatch silk"></i><select aria-label="Active layer"><option>F.SilkS</option></select><svg><use href="#i-chev"/></svg></div>
        <button aria-label="Layer pair"><svg><use href="#i-pair"/></svg></button>
        <hr>
        <button aria-label="Footprint mode"><svg><use href="#i-modmode"/></svg></button>
        <button aria-label="Track mode"><svg><use href="#i-trkmode"/></svg></button>
        <hr>
        <button aria-label="FreeRoute"><svg><use href="#i-route"/></svg></button>
        <hr>
        <button aria-label="Scripting console"><svg><use href="#i-term"/></svg></button>
    </div>
    <div class="toolbar">
        <div class="combo track"><select aria-label="Track width"><option>Track: 0.190 mm (7.48 mils) *</option></select><svg><use href="#i-chev"/></svg></div>
        <div class="combo via"><select aria-label="Via size"><option>Via: 0.60 mm (23.6 mils)/ 0.40 mm (15.7 mils) *</option></select><svg><use href="#i-chev"/></svg></div>
        <hr>
        <button aria-label="Auto track width"><svg><use href="#i-trackw"/></svg></button>
        <hr>
        <div class="combo grid"><select aria-label="Grid"><option>Grid: 1.0000 mm (39.37 mils)</option></select><svg><use href="#i-chev"/></svg></div>
        <hr>
        <div class="combo zoom"><select aria-label="Zoom"><option>Zoom 5.00</option></select><svg><use href="#i-chev"/></svg></div>
    </div>
    <main class="work with-layers">
        <div class="toolbar side">
            <button aria-label="DRC off"><svg><use href="#i-drcoff"/></svg></button>
            <button class="on" aria-label="Grid"><svg><use href="#i-grid"/></svg></button>
            <button aria-label="Polar coordinates"><svg><use href="#i-polar"/></svg></button>
            <button aria-label="Inches"><svg><use href="#i-in"/></svg></button>
            <button class="on" aria-label="Millimeters"><svg><use href="#i-mm"/></svg></button>
            <button aria-label="Cursor shape"><svg><use href="#i-cross"/></svg></button>
            <hr>
            <button class="on" aria-label="Ratsnest"><svg><use href="#i-rats"/></svg></button>
            <button class="on" aria-label="Module ratsnest"><svg><use href="#i-modrats"/></svg></button>
            <hr>
            <button class="on" aria-label="Auto delete track"><svg><use href="#i-autodel"/></svg></button>
            <hr>
            <button class="on" aria-label="Filled zones"><svg><use href="#i-zone1"/></svg></button>
            <button aria-label="Hide zones"><svg><use href="#i-zone2"/></svg></button>
            <button aria-label="Zone outlines"><svg><use href="#i-zone3"/></svg></button>
            <hr>
            <button aria-label="Pads sketch"><svg><use href="#i-padsk"/></svg></button>
            <button aria-label="Vias sketch"><svg><use href="#i-viask"/></svg></button>
            <button aria-label="Tracks sketch"><svg><use href="#i-trksk"/></svg></button>
            <button aria-label="High contrast"><svg><use href="#i-contr"/></svg></button>
            <hr>
            <button class="on" aria-label="Layers manager"><svg><use href="#i-layers"/></svg></button>
            <button aria-label="Microwave tools"><svg><use href="#i-mwave"/></svg></button>
            <hr>
        </div>
        <div class="frame">
            <svg class="canvas pcb" viewBox="1001 129 706 829" preserveAspectRatio="xMinYMin slice">
                <rect x="1001" y="129" width="706" height="829" fill="url(#dots-pcb)"/>

                <g transform="translate(1060 230) scale(.33333)">
                    <rect x="26" y="311" width="1394" height="1394" fill="none" stroke="#c2c200" stroke-width="9"/>
                    <g class="trk">
                        <path d="M690 1508H576L257 1187V655L398 519H683L698 535L642 592V617L660 636H700"/>
                        <path d="M549 938H443L286 778V680L375 590H540"/>
                        <path d="M470 561H495L515 549H567L617 600V625L655 663H700M470 615V640L482 652H605L642 690H700"/>
                        <path d="M400 690H595L620 716H700M328 716L352 744H555L590 760H645L665 744H700"/>
                        <path d="M870 636H970L1033 700V795L985 845V870M870 663H945L992 710V755L870 875M870 690H935L957 712V750L890 818H825L793 850V1325L838 1371H1043L1088 1325V570"/>
                        <path d="M870 716H915L931 735L880 792H800L766 825V1405L805 1445V1480M870 744H895L912 725M780 755L720 815H600L577 838V870M850 535H940"/>
                        <path d="M576 1010V1130M711 1010V1130M849 1010V1130M984 1010V1130M576 1280V1370M711 1280V1370M688 1400V1480"/>
                    </g>
                    <g fill="#840000">
                        <path d="M549 855h56v164h-56zM684 855h56v164h-56zM822 855h56v164h-56zM957 855h56v164h-56zM549 1126h56v164h-56zM684 1126h56v164h-56zM822 1126h56v164h-56zM957 1126h56v164h-56z"/>
                        <path d="M749 628h85v127h-85zM680 626h55v20h-55zM680 653h55v20h-55zM680 680h55v20h-55zM680 706h55v20h-55zM680 734h55v20h-55zM848 626h55v20h-55zM848 653h55v20h-55zM848 680h55v20h-55zM848 706h55v20h-55zM848 734h55v20h-55z"/>
                        <path d="M720 498h48v74h-48zM817 498h48v74h-48zM935 500h65v70h-65zM1060 500h65v70h-65zM585 1361h40v43h-40zM672 1361h38v43h-38zM683 1470h47v72h-47zM785 1470h40v72h-40z"/>
                        <path d="M456 548h28v26h-28zM456 603h28v26h-28zM526 574h28v26h-28zM386 677h28v26h-28zM386 731h28v26h-28zM315 703h28v26h-28zM541 677h28v26h-28zM541 731h28v26h-28zM613 703h28v26h-28z"/>
                    </g>
                    <g fill="none" stroke="#840000" stroke-width="3">
                        <path d="M538 843h75v185h-75zM676 843h75v185h-75zM811 843h75v185h-75zM949 843h75v185h-75zM538 1117h75v181h-75zM676 1117h75v181h-75zM811 1117h75v181h-75zM949 1117h75v181h-75z"/>
                        <path d="M680 620h65v144h-65zM842 620h63v144h-63zM445 542h48v95h-48zM515 568h51v42h-51zM376 670h48v42h-48zM376 724h48v42h-48zM307 697h48v42h-48zM532 670h48v42h-48zM532 724h48v42h-48zM604 697h44v42h-44z"/>
                    </g>
                    <g fill="none" stroke="#9a8c8c" stroke-width="3"><path d="M481 826H1082V1316H481ZM709 488H875V583H709ZM921 490H1133V580H921ZM571 1348H721V1417H571ZM670 1459H839V1554H670Z"/></g>
                    <g fill="none" stroke="#008484" stroke-width="5"><path d="M765 486H822M765 582H822M975 494H1126V571H1095M628 1350H668M628 1415H668M722 1458H788M722 1554H788M533 930H502V1210H540M1024 930H1058V1210H1024M1029 1210V1290"/></g>
                    <g fill="none" stroke="#dcc81e" stroke-width="6"><path d="M555 932V860H596V932M693 932V860H732V932M829 932V860H869V932M966 932V860H1004V932M555 1208V1282H596V1208M693 1208V1282H732V1208M829 1208V1282H869V1208M966 1208V1282H1004V1208"/><path d="M737 500H848V570H737ZM970 502H1082V568H970ZM600 1360H692V1405H600ZM697 1471H809V1540H697ZM1016 515L1050 535L1016 557ZM1052 513V558"/></g>
                    <rect x="507" y="933" width="547" height="274" fill="none" stroke="#c8d05a" stroke-width="6"/>
                    <circle cx="712" cy="606" r="10" fill="#008484"/>
                </g>

                <g class="dimline">
                    <path d="M1550 333H1637M1550 798H1637M1588 335V796M1577 357L1588 335L1599 357M1577 774L1588 796L1599 774"/>
                    <path d="M1068 815V918M1533 815V918M1070 870H1531M1092 859L1070 870L1092 881M1509 859L1531 870L1509 881"/>
                </g>
                <path d="M1390.500 947V958" stroke="#fff"/>

                <g class="silk-bold">
                    <text x="1301" y="273">MCP9804 + MMBT3904 test PCB</text>
                    <text x="1300" y="303">2018/06/12 by Mej</text>
                    <g class="cu"><text x="1122" y="771">GND</text><text x="1193" y="771">Vdd</text><text x="1408" y="771">SDA</text><text x="1480" y="771">SCL</text></g>
                </g>
                <g class="dimtext">
                    <text x="1301" y="909">26 mm</text>
                    <text transform="translate(1627 567) rotate(-90)">26mm</text>
                </g>
                <g class="silk-text">
                    <text x="1308" y="387">R1</text><text x="1175" y="434">Q1</text><text x="1125" y="477">Q3</text><text x="1205" y="477">Q2</text><text x="1313" y="508">U1</text><text x="1259" y="674">C1</text><text x="1296" y="770">R0</text>
                    <text transform="translate(1414 390) rotate(-90)">D1</text>
                    <text class="mix" transform="translate(1440 602) rotate(-90)">J1</text>
                </g>
                <g class="fab">
                    <text x="1316" y="413">R1</text><text x="1304" y="737">R0</text><text x="1395" y="435" class="tiny strong">D1</text><text x="1270" y="694" class="tiny">C1</text>
                </g>
                <g class="padname">
                    <text transform="translate(1336 474) rotate(-90)">GND</text><text transform="translate(1321 465) rotate(-90)">6</text>
                    <g class="tiny">
                        <text transform="translate(1251 553) rotate(-90)">GND</text><text transform="translate(1260 546) rotate(-90)">8</text>
                        <text transform="translate(1297 553) rotate(-90)">Vdd</text><text transform="translate(1306 546) rotate(-90)">6</text>
                        <text transform="translate(1351 546) rotate(-90)">4</text><text transform="translate(1397 546) rotate(-90)">2</text>
                        <text transform="translate(1251 642) rotate(-90)">GND</text><text transform="translate(1260 636) rotate(-90)">7</text>
                        <text transform="translate(1297 642) rotate(-90)">Vdd</text><text transform="translate(1306 636) rotate(-90)">5</text>
                        <text transform="translate(1351 636) rotate(-90)">3</text><text transform="translate(1397 636) rotate(-90)">1</text>
                        <text transform="translate(1306 412) rotate(-90)">1</text><text transform="translate(1314 416) rotate(-90)">Vdd</text><text transform="translate(1340 412) rotate(-90)">2</text>
                        <text transform="translate(1380 400) rotate(90)">2</text><text transform="translate(1421 400) rotate(90)">1</text>
                        <text x="1257" y="697">GN</text><text x="1285" y="697">Vd</text>
                        <text transform="translate(1294 738) rotate(-90)">Vdd</text><text transform="translate(1300 734) rotate(-90)">2</text><text transform="translate(1334 734) rotate(-90)">1</text>
                    </g>
                </g>
            </svg>
            <div class="vscroll"><svg><use href="#i-up"/></svg><i class="lead"></i><i class="thumb"></i><i class="rest"></i><svg><use href="#i-down"/></svg></div>
            <div class="hscroll"><svg><use href="#i-left"/></svg><i class="lead"></i><i class="thumb"></i><i class="rest"></i><svg><use href="#i-right"/></svg></div>
            <div class="corner"></div>
        </div>
        <div class="toolbar side">
            <button aria-label="Select"><svg><use href="#i-arrow"/></svg></button>
            <hr>
            <button aria-label="Highlight net"><svg><use href="#i-hlnet"/></svg></button>
            <button aria-label="Local ratsnest"><svg><use href="#i-local"/></svg></button>
            <hr>
            <button aria-label="Add footprint"><svg><use href="#i-addmod"/></svg></button>
            <button aria-label="Add track"><svg><use href="#i-track"/></svg></button>
            <button aria-label="Add zone"><svg><use href="#i-zone"/></svg></button>
            <button aria-label="Add keepout"><svg><use href="#i-keep"/></svg></button>
            <hr>
            <button aria-label="Line"><svg><use href="#i-dash"/></svg></button>
            <button aria-label="Circle"><svg><use href="#i-circle"/></svg></button>
            <button aria-label="Arc"><svg><use href="#i-arc"/></svg></button>
            <button class="on" aria-label="Text"><svg><use href="#i-text"/></svg></button>
            <hr>
            <button aria-label="Dimension"><svg><use href="#i-dim"/></svg></button>
            <button aria-label="Target"><svg><use href="#i-target"/></svg></button>
            <hr>
            <button aria-label="Delete"><svg><use href="#i-trash"/></svg></button>
            <hr>
            <button aria-label="Drill origin"><svg><use href="#i-origin"/></svg></button>
            <button aria-label="Grid origin"><svg><use href="#i-gridorg"/></svg></button>
        </div>
        <aside class="visibles">
            <h2>Visibles</h2>
            <div class="notebook">
                <div class="tabs"><button class="current">Layer</button><button>Render</button></div>
                <ul>
                    <li><i class="swatch red"></i><label><input type="checkbox" checked>F.Cu</label></li>
                    <li><i class="swatch green"></i><label><input type="checkbox" checked>B.Cu</label></li>
                    <li><i class="swatch purple"></i><label><input type="checkbox" checked>F.Adhes</label></li>
                    <li><i class="swatch blue"></i><label><input type="checkbox" checked>B.Adhes</label></li>
                    <li><i class="swatch red"></i><label><input type="checkbox" checked>F.Paste</label></li>
                    <li><i class="swatch cyan"></i><label><input type="checkbox" checked>B.Paste</label></li>
                    <li class="selected"><i class="swatch silk"></i><label><input type="checkbox" checked>F.SilkS</label></li>
                    <li><i class="swatch purple"></i><label><input type="checkbox" checked>B.SilkS</label></li>
                    <li><i class="swatch purple"></i><label><input type="checkbox" checked>F.Mask</label></li>
                    <li><i class="swatch olive"></i><label><input type="checkbox" checked>B.Mask</label></li>
                    <li><i class="swatch light"></i><label><input type="checkbox" checked>Dwgs.User</label></li>
                    <li><i class="swatch blue"></i><label><input type="checkbox" checked>Cmts.User</label></li>
                    <li><i class="swatch green"></i><label><input type="checkbox" checked>Eco1.User</label></li>
                    <li><i class="swatch yellow"></i><label><input type="checkbox" checked>Eco2.User</label></li>
                    <li><i class="swatch yellow"></i><label><input type="checkbox" checked>Edge.Cuts</label></li>
                    <li><i class="swatch magenta"></i><label><input type="checkbox" checked>Margin</label></li>
                    <li><i class="swatch gray"></i><label><input type="checkbox" checked>F.CrtYd</label></li>
                    <li><i class="swatch yellow"></i><label><input type="checkbox" checked>B.CrtYd</label></li>
                    <li><i class="swatch yellow"></i><label><input type="checkbox" checked>F.Fab</label></li>
                    <li><i class="swatch red"></i><label><input type="checkbox" checked>B.Fab</label></li>
                </ul>
            </div>
        </aside>
    </main>
    <dl class="messages">
        <div class="dgreen"><dt>Pads</dt><dd>36</dd></div>
        <div class="dgreen"><dt>Vias</dt><dd>0</dd></div>
        <div class="dgreen"><dt>Track Segments</dt><dd>93</dd></div>
        <div class="dteal"><dt>Nodes</dt><dd>36</dd></div>
        <div class="dred"><dt>Nets</dt><dd>12</dd></div>
        <div class="dgreen"><dt>Links</dt><dd>25</dd></div>
        <div class="dgreen"><dt>Connections</dt><dd>25</dd></div>
        <div class="dblue"><dt>Unconnected</dt><dd>0</dd></div>
    </dl>
    <footer class="status">
        <span></span><span>Z 5.00</span><span>X 145.000000&nbsp; Y 114.000000</span><span>dx 145.000000&nbsp; dy 114.000000&nbsp; dist 184.448</span><span>mm</span><span>Add text</span>
    </footer>
</section>

</div>
</body>
</html>
```
FILE: styles.css
```css
* {
  box-sizing: border-box;
}

body {
  margin: 0;
  font-family: Roboto, "Open Sans", sans-serif;
  font-size: 12px;
  color: #000;
}

button {
  margin: 0;
  padding: 0;
  border: none;
  background: none;
  font: inherit;
  color: inherit;
}

.defs {
  position: absolute;
}

.desktop {
  display: flex;
  height: 100vh;
}

/* windows */

.window {
  flex: 1;
  min-width: 0;
  display: flex;
  flex-direction: column;
  background: #f0f0f0;
  border: 1px solid #2a2a33;
}

.window.active {
  border-color: #1a6fba;
}

.titlebar {
  display: flex;
  align-items: center;
  height: 29px;
  padding-left: 8px;
  background: #fff;
  color: #999;
}

.active .titlebar {
  color: #000;
}

.app-icon {
  width: 16px;
  height: 16px;
  margin-right: 5px;
}

.titlebar h1 {
  flex: 1;
  margin: 0;
  font-size: 12px;
  font-weight: normal;
  white-space: nowrap;
}

.controls {
  display: flex;
}

.controls button {
  display: flex;
  justify-content: center;
  width: 46px;
}

.controls svg {
  width: 10px;
  height: 10px;
}

.menu {
  display: flex;
  gap: 13px;
  height: 21px;
  padding: 2px 0 0 7px;
  background: #fff;
  border-bottom: 1px solid #f0f0f0;
  color: #6d6d6d;
}

.active .menu {
  color: #000;
}

/* toolbars */

.toolbar {
  display: flex;
  align-items: center;
  height: 38px;
  padding-left: 5px;
  background: linear-gradient(#f0f0f0, #c4c4c4);
  border-bottom: 1px solid #a8a8a8;
}

.toolbar button {
  flex: none;
  display: flex;
  align-items: center;
  justify-content: center;
  width: 32px;
  height: 32px;
  margin: 1px;
}

.toolbar button svg {
  width: 24px;
  height: 24px;
  overflow: visible;
}

.toolbar button:disabled svg {
  opacity: 0.4;
}

.toolbar button.on {
  background: #b3d9f5;
  border: 1px solid #2a7fcf;
}

.toolbar hr {
  flex: none;
  width: 1px;
  height: 24px;
  margin: 0 4px;
  border: none;
  background: #a8a8a8;
}

.toolbar.side {
  flex-direction: column;
  height: auto;
  padding: 5px 0 0;
  border: none;
  background: linear-gradient(#f4f4f4, #c4c4c4);
}

.toolbar.side hr {
  width: 24px;
  height: 1px;
  margin: 4px 0;
}

symbol text {
  font-family: "Open Sans", sans-serif;
}

.cap {
  font-family: "Liberation Serif", serif;
  font-weight: bold;
  fill: #fff;
  text-anchor: middle;
}

.unit {
  font-weight: bold;
  fill: #333;
  text-anchor: middle;
}

.glyph {
  fill: #222;
  text-anchor: middle;
}

.serif {
  font-family: "Liberation Serif", serif;
  font-weight: bold;
  fill: #333;
  text-anchor: middle;
}

/* drop-downs */

.combo {
  position: relative;
  height: 23px;
}

.combo select {
  width: 100%;
  height: 100%;
  padding: 0 3px;
  appearance: none;
  border: 1px solid #a8a8a8;
  border-radius: 0;
  background: #e2e2e2;
  color: #000;
  font: inherit;
}

.combo svg {
  position: absolute;
  right: 4px;
  top: 7px;
  width: 10px;
  height: 10px;
}

.combo.layer {
  width: 128px;
  margin: 0 1px;
}

.combo.layer select {
  padding-left: 25px;
  background: #fff;
}

.combo.layer .swatch {
  position: absolute;
  left: 7px;
  top: 4px;
  width: 14px;
  height: 14px;
}

.combo.track {
  width: 180px;
  margin: 0 2px 0 1px;
}

.combo.via {
  width: 272px;
}

.combo.grid {
  width: 183px;
  margin: 0 1px;
}

.combo.zoom {
  width: 102px;
}

/* drawing area */

.work {
  flex: 1;
  min-height: 0;
  display: grid;
  grid-template-columns: 38px 1fr 38px;
}

.work.with-layers {
  grid-template-columns: 38px 1fr 38px 156px;
}

.frame {
  display: grid;
  grid-template-columns: 1fr 17px;
  grid-template-rows: 1fr 17px;
  min-width: 0;
  min-height: 0;
  border: solid #6e6e6e;
  border-width: 2px 1px 2px 2px;
}

.canvas {
  display: block;
  width: 100%;
  height: 100%;
  min-height: 0;
  background: #fff;
  shape-rendering: crispEdges;
}

.canvas circle {
  shape-rendering: auto;
}

.canvas.pcb {
  background: #000;
}

.vscroll,
.hscroll {
  display: flex;
  background: #f0f0f0;
}

.vscroll {
  flex-direction: column;
}

.vscroll svg,
.hscroll svg {
  flex: none;
  width: 17px;
  height: 17px;
}

.thumb {
  background: #cdcdcd;
}

.sch + .vscroll .thumb {
  flex: 408;
}

.sch + .vscroll .rest {
  flex: 425;
}

.sch ~ .hscroll .lead {
  flex: 73;
}

.sch ~ .hscroll .thumb {
  flex: 365;
}

.sch ~ .hscroll .rest {
  flex: 390;
}

.pcb + .vscroll .lead {
  flex: 256;
}

.pcb + .vscroll .thumb {
  flex: 178;
}

.pcb + .vscroll .rest {
  flex: 362;
}

.pcb ~ .hscroll .lead {
  flex: 279;
}

.pcb ~ .hscroll .thumb {
  flex: 89;
}

.pcb ~ .hscroll .rest {
  flex: 304;
}

.corner {
  background: #f0f0f0;
}

/* schematic */

.wire path {
  fill: none;
  stroke: #008400;
  stroke-width: 3px;
}

.part,
.bjt {
  fill: none;
  stroke: #840000;
  stroke-width: 3px;
}

.sch text {
  font-family: "Liberation Mono", monospace;
}

.lbl text {
  font-size: 16px;
  fill: #840000;
}

.pin text {
  font-size: 14px;
  fill: #840000;
}

.ref text {
  font-size: 13px;
  fill: #007c7c;
}

.ref .big {
  font-size: 16px;
}

/* board */

.pcb text {
  font-family: "DejaVu Sans Mono", monospace;
}

.trk path {
  fill: none;
  stroke: #840000;
  stroke-width: 10px;
  stroke-linejoin: round;
  shape-rendering: auto;
}

.dimline path {
  fill: none;
  stroke: #008484;
  stroke-width: 4px;
  shape-rendering: auto;
}

.silk-bold text {
  font-size: 27px;
  font-weight: bold;
  fill: #008484;
  text-anchor: middle;
}

.silk-bold .cu text {
  fill: #840000;
}

.dimtext text {
  font-size: 46px;
  fill: #008484;
  stroke: #008484;
  stroke-width: 1px;
  text-anchor: middle;
}

.silk-text text {
  font-size: 26px;
  fill: #148888;
  stroke: #148888;
  stroke-width: 1px;
}

.silk-text .mix {
  fill: #c8c88c;
  stroke: #c8c88c;
}

.fab text {
  font-size: 14px;
  fill: #c2b450;
}

.pcb .tiny,
.pcb .tiny text {
  font-size: 10px;
}

.fab .strong {
  font-weight: bold;
  fill: #d8d800;
}

.padname text {
  font-size: 14px;
  fill: #fff;
}

/* layers panel */

.visibles {
  display: flex;
  flex-direction: column;
  margin-left: 6px;
  padding-bottom: 4px;
  border-left: 1px solid #a8a8a8;
}

.visibles h2 {
  height: 17px;
  margin: 0 0 6px;
  padding-left: 3px;
  background: linear-gradient(90deg, #c0c0c0, #dcdcdc);
  font: 12px/17px "Liberation Sans", sans-serif;
}

.notebook {
  flex: 1;
  margin: 0 7px 0 4px;
  border: 1px solid #a0a0a0;
  border-bottom: none;
}

.tabs {
  display: flex;
  align-items: flex-end;
  height: 24px;
  padding-left: 6px;
  background: linear-gradient(#c4c4c4, #f0f0f0);
  border-bottom: 1px solid #a0a0a0;
}

.tabs button {
  height: 20px;
  padding: 0 7px;
  border: 1px solid #a8a8a8;
  border-bottom: none;
  border-radius: 3px 3px 0 0;
  background: #e2e2e2;
}

.tabs .current {
  background: #fff;
}

.notebook ul {
  margin: 4px 0 0;
  padding: 0;
  list-style: none;
}

.notebook li {
  display: flex;
  align-items: center;
  height: 18px;
  padding-left: 17px;
}

.notebook li.selected {
  padding-left: 4px;
}

.selected::before {
  content: "";
  width: 7px;
  height: 14px;
  margin-right: 6px;
  clip-path: polygon(0 0, 100% 50%, 0 100%);
  background: linear-gradient(#7c7cf4 50%, #0000d8 50%);
}

.notebook label {
  display: flex;
  align-items: center;
}

.notebook input {
  appearance: none;
  display: flex;
  justify-content: center;
  width: 13px;
  height: 13px;
  margin: 0 3px 0 5px;
  border: 1px solid #333;
  background: #fff;
}

.notebook input:checked::before {
  content: "";
  width: 4px;
  height: 8px;
  border: solid #333;
  border-width: 0 1px 1px 0;
  transform: rotate(40deg);
}

.swatch {
  width: 12px;
  height: 10px;
  border: 1px solid #000;
}

.notebook .swatch {
  outline: 1px solid #b4b4b4;
  outline-offset: 2px;
}

.red { background: #840000; }
.green { background: #008400; }
.purple { background: #840084; }
.blue { background: #000084; }
.cyan { background: #00c2c2; }
.silk { background: #008484; }
.olive { background: #848400; }
.light { background: #c2c2c2; }
.yellow { background: #c2c200; }
.magenta { background: #c200c2; }
.gray { background: #848484; }

/* bottom bars */

.messages {
  display: flex;
  gap: 29px;
  height: 39px;
  margin: 0;
  padding: 0 12px;
  line-height: 15px;
  border-bottom: 8px solid #c0c0c0;
}

.messages dd {
  margin: 0;
}

.dgreen { color: #005000; }
.dteal { color: #005050; }
.dred { color: #840000; }
.dblue { color: #000084; }

.status {
  display: flex;
  align-items: center;
  height: 23px;
}

.status span {
  flex: none;
  height: 19px;
  padding-left: 5px;
  line-height: 19px;
  border-right: 1px solid #d7d7d7;
  white-space: nowrap;
}

.status span:nth-child(1) { width: 225px; padding-left: 1px; }
.status span:nth-child(2) { width: 66px; }
.status span:nth-child(3) { width: 173px; }
.status span:nth-child(4) { width: 260px; }
.status span:nth-child(5) { width: 54px; }

.status span:last-child {
  flex: 1;
  border: none;
}
```
